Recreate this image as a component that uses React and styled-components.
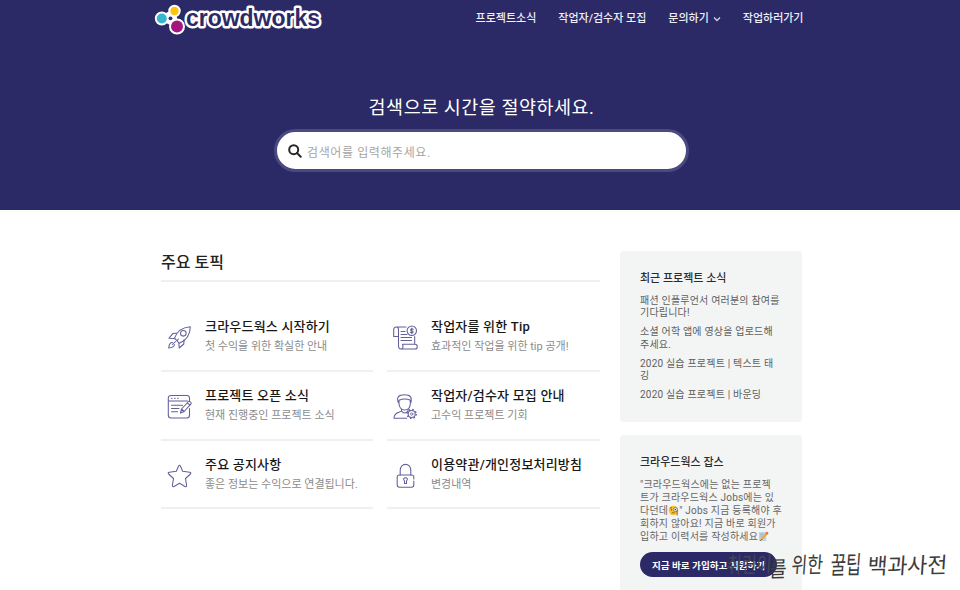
import React from 'react';
import styled, { createGlobalStyle } from 'styled-components';

const topics = [
  { icon: 'rocket', title: '크라우드웍스 시작하기', text: '첫 수익을 위한 확실한 안내' },
  { icon: 'scroll', title: '작업자를 위한 Tip', text: '효과적인 작업을 위한 tip 공개!' },
  { icon: 'note', title: '프로젝트 오픈 소식', text: '현재 진행중인 프로젝트 소식' },
  { icon: 'worker', title: '작업자/검수자 모집 안내', text: '고수익 프로젝트 기회' },
  { icon: 'star', title: '주요 공지사항', text: '좋은 정보는 수익으로 연결됩니다.' },
  { icon: 'lock', title: '이용약관/개인정보처리방침', text: '변경내역' },
];

const news = [
  ['패션 인플루언서 여러분의 참여를', '기다립니다!'],
  ['소셜 어학 앱에 영상을 업로드해', '주세요.'],
  ['2020 실습 프로젝트 | 텍스트 태', '깅'],
  ['2020 실습 프로젝트 | 바운딩'],
];

const markWords = [
  { word: '취린이', x: 6, y: 33, squeeze: 0.86, faint: true },
  { word: '를', x: 49, y: 37, squeeze: 0.98 },
  { word: '위한', x: 71, y: 33, squeeze: 0.9 },
  { word: '꿀팁', x: 110, y: 34, squeeze: 0.88, tall: 1.3 },
  { word: '백과사전', x: 147, y: 34, squeeze: 1.14 },
];

const icons = {
  rocket: (
    <>
      <path d="M7.5 13.2C9.5 7 14.500 2.500 23.300 1.700C23.200 10 19 15.500 12.400 18.300Z" />
      <circle cx="16.300" cy="8.300" r="2.800" />
      <path d="M9.500 8.300L5.800 8.600L2 13.200L7.300 13.600M17 14.800L16.800 19L12.200 23L11.900 18.500" />
      <path d="M5.500 17.500C3.500 17.500 2 19.500 1.700 23C5 22.800 7.300 21.300 7.500 19.500M8.500 16.500L5.500 19.500M10 15.500L11.500 14" />
    </>
  ),
  scroll: (
    <>
      <path d="M13 2H3.500C1.500 2 .7 3.200.7 5V11.500H5.500V4.500C5.500 2.800 4.800 2 3.500 2" />
      <path d="M5.500 11V20.500M21.700 11.500V19M8 24H22C25 24 25 19.300 22 19.300H9.500C10.500 21.500 10 24 8 24C6 24 5.500 22.500 5.500 20.500" />
      <circle cx="18.800" cy="5.700" r="4.700" />
      <path d="M20.300 4.300C19.500 3.200 17.400 3.700 17.600 4.900C17.800 6.100 20.100 5.500 20.100 6.900C20 8.100 17.800 8.100 17.200 7.100M18.800 2.900V8.700M8 6.500H12M8 9.500H14M8 12.500H18.500M8 15.500H18.500" />
    </>
  ),
  note: (
    <>
      <path d="M22.500 7V4C22.500 2.300 21.500 1.500 20 1.500H4C2.300 1.500 1.300 2.500 1.300 4V21C1.300 23 2.300 24 4 24H20C21.700 24 22.500 23 22.500 21V14.500M1.300 7H20.500" />
      <path d="M4.500 4.300H5.200M7.500 4.300H8.200M10.500 4.300H11.200M4.500 11.300H15.500M4.500 14.500H12M4.500 17.700H10.500" />
      <path d="M13.500 19L14.500 15L21.500 7.500C22.300 6.700 24.800 8.600 24 9.900L17.200 17.500ZM14.500 15L17.200 17.500M20.300 8.800L22.900 11.200" />
    </>
  ),
  worker: (
    <>
      <path d="M5.300 8.500C3.200 3 5.800.8 11.500.8C17.200.8 19.300 3 17.900 8.500M6 6.300C10 4.500 14 4.500 17.300 6.300V10C17 14 14.500 16 11.700 16C8.500 16 6 13.500 6 9.500Z" />
      <path d="M8.500 15.200V17C7.500 18.500 1 17.500 1 24.300H13.500M8.500 17C10.500 19.700 13 19.700 15 17V15.200" />
      <circle cx="18.700" cy="20" r="3.500" />
      <circle cx="18.700" cy="20" r="1.200" strokeWidth=".8" />
      <circle cx="18.700" cy="20" r="4.500" strokeWidth="1.500" strokeDasharray="1.500 2.034" strokeLinecap="butt" />
    </>
  ),
  star: (
    <path d="M12.500 2.200C12.800 2.200 13.200 2.500 13.400 3L15.700 8.300L22.700 9.200C23.900 9.400 24.200 10.200 23.400 11L18.500 15.500L19.600 22.300C19.700 23.500 19 23.900 18 23.500L12.500 20.300L7 23.500C6 23.900 5.300 23.500 5.400 22.300L6.500 15.500L1.600 11C.8 10.200 1.100 9.400 2.300 9.200L9.300 8.300L11.600 3C11.800 2.500 12.200 2.200 12.500 2.200Z" />
  ),
  lock: (
    <>
      <path d="M7.200 12V7.500C7.200-.7 17.800-.7 17.800 7.500V12" />
      <path d="M20.800 16V14C20.800 12.500 20.200 12 18.800 12H6.300C4.900 12 4.200 12.700 4.200 14V22C4.200 23.500 5 24.200 6.500 24.200H18.500C20 24.200 20.800 23.500 20.800 22V18" />
      <path d="M11.500 17.800C9.800 16.500 10.700 14.800 12.500 14.800C14.300 14.800 15.200 16.500 13.500 17.800V20.500H11.500Z" />
    </>
  ),
};

const Logo = () => (
  <LogoSvg viewBox="0 0 170 36">
    <g fill="#fff" stroke="#fff" strokeWidth="4">
      <circle cx="7.800" cy="17.500" r="5" />
      <circle cx="20.500" cy="10" r="4.200" />
      <circle cx="23" cy="25.500" r="6" />
      <path d="M7 17L20 10L22 25Z" />
    </g>
    <circle cx="7.800" cy="17.500" r="5" fill="#37b6cd" />
    <circle cx="20.500" cy="10" r="4.200" fill="#fdc40d" />
    <circle cx="23" cy="25.500" r="6" fill="#a3187e" />
    <circle cx="16.500" cy="17.300" r="1.900" fill="#2c2a66" />
    <LogoText x="32" y="25" textLength="134" lengthAdjust="spacingAndGlyphs">crowdworks</LogoText>
  </LogoSvg>
);

const App = () => {
  return (
    <Page>
      <GlobalStyle />
      <Header>
        <TopBar>
          <Logo />
          <Nav>
            <NavItem>프로젝트소식</NavItem>
            <NavItem>작업자/검수자 모집</NavItem>
            <NavItem>
              문의하기
              <Chevron viewBox="0 0 8 6"><path d="M1 1.500L4 4.500L7 1.500" /></Chevron>
            </NavItem>
            <NavItem>작업하러가기</NavItem>
          </Nav>
        </TopBar>
        <HeroTitle>검색으로 시간을 절약하세요.</HeroTitle>
        <SearchBox>
          <SearchIcon viewBox="0 0 14 14">
            <circle cx="5.700" cy="5.700" r="4.500" />
            <path d="M9 9L12.700 12.700" />
          </SearchIcon>
          <Placeholder>검색어를 입력해주세요.</Placeholder>
        </SearchBox>
      </Header>

      <Main>
        <Topics>
          <SectionTitle>주요 토픽</SectionTitle>
          <Grid>
            {topics.map((t) => (
              <Topic key={t.icon}>
                <TopicIcon viewBox="0 0 25 25">{icons[t.icon]}</TopicIcon>
                <div>
                  <TopicTitle>{t.title}</TopicTitle>
                  <TopicText>{t.text}</TopicText>
                </div>
              </Topic>
            ))}
          </Grid>
        </Topics>

        <Sidebar>
          <Card $height={170.5}>
            <CardTitle>최근 프로젝트 소식</CardTitle>
            <NewsList>
              {news.map((lines) => (
                <NewsItem key={lines[0]}>
                  {lines.map((line) => <Line key={line}>{line}</Line>)}
                </NewsItem>
              ))}
            </NewsList>
          </Card>
          <Card $height={170}>
            <CardTitle>크라우드웍스 잡스</CardTitle>
            <Pitch>
              <Line>"크라우드웍스에는 없는 프로젝</Line>
              <Line>트가 크라우드웍스 Jobs에는 있</Line>
              <Line>
                다던데
                <Emoji viewBox="0 0 12 12">
                  <circle cx="6" cy="6" r="5.300" fill="#fbc52d" />
                  <circle cx="8" cy="5" r="2.300" fill="#e8eef2" stroke="#7d6540" strokeWidth=".8" />
                  <circle cx="8" cy="5" r=".8" fill="#54412a" />
                  <circle cx="3.700" cy="5.300" r=".8" fill="#54412a" />
                  <path d="M2 3.300L4.500 2.800M4 8.800Q6 7.800 7.500 8.800M10 6V11.500" fill="none" stroke="#6d5128" strokeWidth=".9" />
                </Emoji>
                " Jobs 지금 등록해야 후
              </Line>
              <Line>회하지 않아요! 지금 바로 회원가</Line>
              <Line>
                입하고 이력서를 작성하세요
                <Emoji viewBox="0 0 12 12">
                  <path d="M1 1H9V11H1Z" fill="#bcd5e6" />
                  <path d="M2.500 3.500H6M2.500 5.500H5" stroke="#7f9eb6" strokeWidth=".7" />
                  <path d="M3.500 9.500L9.500 2.800" stroke="#f2a82b" strokeWidth="2.400" />
                  <path d="M9 3.300L10.700 1.500" stroke="#df6170" strokeWidth="2.400" />
                  <path d="M2.500 10.700L4 9" stroke="#5c4b3a" strokeWidth="1" />
                </Emoji>
              </Line>
            </Pitch>
            <Button>지금 바로 가입하고 지원하기</Button>
          </Card>
        </Sidebar>
      </Main>

      <Watermark viewBox="0 0 240 50">
        {markWords.map((m) => (
          <MarkText
            key={m.word}
            transform={`translate(${m.x} ${m.y}) rotate(-1) skewX(-5) scale(${m.squeeze} ${m.tall || 1.15})`}
            $faint={m.faint}
          >
            {m.word}
          </MarkText>
        ))}
      </Watermark>
    </Page>
  )
}

const GlobalStyle = createGlobalStyle`
  * {
    box-sizing: border-box;
  }

  body {
    margin: 0;
    background: #fff;
    font-family: Roboto, 'Noto Sans CJK KR', sans-serif;
  }

  h1, h2, h3, p, ul {
    margin: 0;
    padding: 0;
  }
`

const Page = styled.div`
  position: relative;
  width: 960px;
  height: 590px;
  overflow: hidden;
  white-space: nowrap;
`

const Header = styled.header`
  height: 210px;
  background: #2c2a66;
  color: #fff;
  display: flex;
  flex-direction: column;
  align-items: center;
`

const TopBar = styled.div`
  width: 649px;
  height: 37px;
  margin-right: 2px;
  display: flex;
  justify-content: space-between;
  align-items: center;
`

const LogoSvg = styled.svg`
  width: 170px;
  height: 36px;
  margin-left: -1px;
  overflow: visible;
`

const LogoText = styled.text`
  font: bold 24px 'Liberation Sans', sans-serif;
  fill: #2c2a66;
  stroke: #fff;
  stroke-width: 5px;
  stroke-linejoin: round;
  paint-order: stroke;
`

const Nav = styled.nav`
  display: flex;
  gap: 22px;
`

const NavItem = styled.span`
  font-size: 11px;
  line-height: 16px;
  font-weight: 500;
  color: #efeff5;
`

const Chevron = styled.svg`
  width: 8px;
  height: 6px;
  margin-left: 4px;
  fill: none;
  stroke: #d5d5e2;
  stroke-width: 1.300;
`

const HeroTitle = styled.h1`
  font-size: 18.500px;
  line-height: 28px;
  font-weight: 400;
  letter-spacing: 0.5px;
  margin: 57px 0 7px 3px;
`

const SearchBox = styled.div`
  width: 415px;
  height: 43px;
  margin-left: 3px;
  padding-left: 11px;
  border: 3px solid #4a4980;
  border-radius: 22px;
  background: #fff;
  display: flex;
  align-items: center;
`

const SearchIcon = styled.svg`
  width: 14px;
  height: 14px;
  margin: 1px 5px 0 0;
  fill: none;
  stroke: #282828;
  stroke-width: 2;
  stroke-linecap: round;
`

const Placeholder = styled.span`
  padding-top: 1px;
  font-size: 12px;
  letter-spacing: 0.6px;
  color: #a5a5a5;
`

const Main = styled.main`
  width: 641px;
  margin-left: 161px;
  padding-top: 41px;
  display: flex;
  gap: 20px;
`

const Topics = styled.section`
  width: 439px;
`

const SectionTitle = styled.h2`
  height: 31px;
  line-height: 23px;
  font-size: 16px;
  font-weight: 500;
  color: #222;
  border-bottom: 2px solid #efefef;
`

const Grid = styled.div`
  display: grid;
  grid-template-columns: 212px 213px;
  column-gap: 14px;
  padding-top: 21px;
`

const Topic = styled.div`
  height: 68.800px;
  padding: 13px 0 0 6px;
  display: flex;
  gap: 13px;
  border-bottom: 2px solid #f0f0f0;
`

const TopicIcon = styled.svg`
  width: 25px;
  height: 25px;
  margin-top: 9px;
  flex-shrink: 0;
  fill: none;
  stroke: #625f99;
  stroke-width: 1.050;
  stroke-linecap: round;
  stroke-linejoin: round;
`

const TopicTitle = styled.h3`
  font-size: 13px;
  line-height: 21px;
  font-weight: 500;
  letter-spacing: 0.2px;
  color: #181818;
`

const TopicText = styled.p`
  font-size: 11px;
  line-height: 20px;
  color: #8b8b8b;
`

const Sidebar = styled.aside`
  width: 182px;
  display: flex;
  flex-direction: column;
  gap: 13.500px;
`

const Card = styled.div`
  height: ${props => props.$height}px;
  padding: 19px 20px;
  border-radius: 4px;
  background: #f3f5f5;
`

const CardTitle = styled.h3`
  font-size: 11px;
  line-height: 17px;
  font-weight: 500;
  color: #2b2b2b;
`

const NewsList = styled.ul`
  margin-top: 7.500px;
  list-style: none;
  font-size: 10px;
  line-height: 12.500px;
  letter-spacing: 0.2px;
  color: #5e5e5e;
`

const NewsItem = styled.li`
  margin-bottom: 6.500px;
`

const Line = styled.span`
  display: block;
`

const Pitch = styled.p`
  margin-top: 7px;
  font-size: 10px;
  line-height: 13px;
  letter-spacing: 0.2px;
  color: #666;
`

const Emoji = styled.svg`
  width: 11px;
  height: 11px;
  vertical-align: -2px;
`

const Button = styled.button`
  width: 137px;
  height: 25px;
  margin-top: 9px;
  padding: 0 0 0 12px;
  border: 0;
  border-radius: 13px;
  background: #2c2a66;
  color: #fff;
  text-align: left;
  font-family: inherit;
  font-size: 9.600px;
  font-weight: 700;
`

const Watermark = styled.svg`
  position: absolute;
  left: 720px;
  top: 540px;
  width: 240px;
  height: 50px;
`

const MarkText = styled.text`
  font: 400 19px 'Noto Sans CJK KR', sans-serif;
  fill: ${props => props.$faint ? '#45454f' : '#3c3c3c'};
`

export default App;
